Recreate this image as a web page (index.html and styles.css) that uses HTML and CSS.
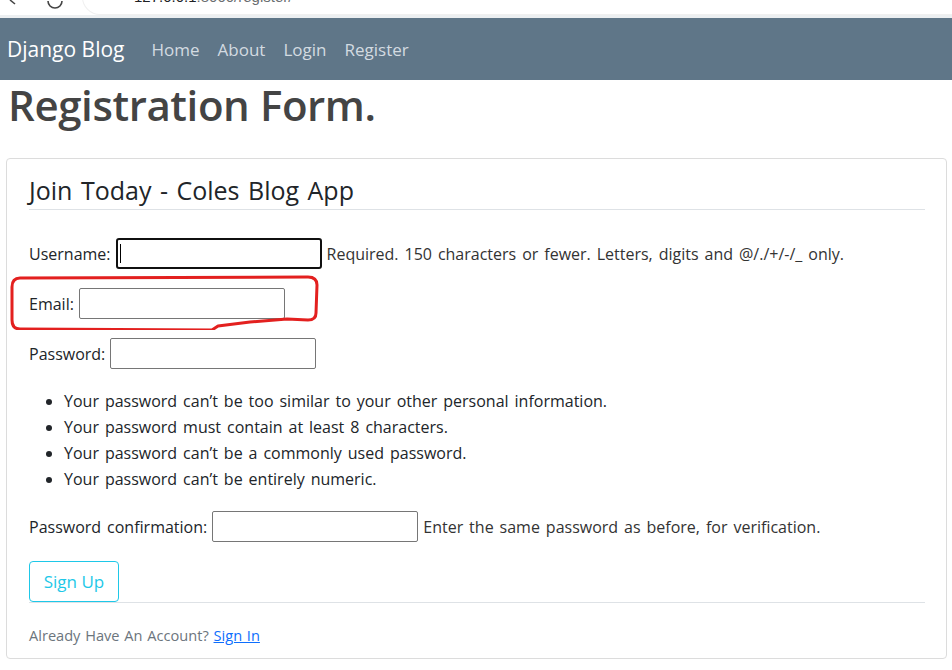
FILE: index.html
```html
<!DOCTYPE html>
<html lang="en">
<head>
<meta charset="utf-8">
<title>Register</title>
<link rel="stylesheet" href="styles.css">
</head>
<body>
<div class="chrome">
  <svg class="chrome-icons" width="130" height="18" viewBox="0 0 130 18">
    <path d="M10 0 L15 4" stroke="#444" stroke-width="1.6" fill="none"/>
    <path d="M48 1 A7 7 0 0 0 62 1" stroke="#444" stroke-width="1.6" fill="none"/>
    <path d="M102 0 A7 7 0 0 0 116 0" stroke="#666" stroke-width="1.3" fill="none"/>
  </svg>
  <div class="pill"><span class="host">127.0.0.1</span><span class="path">:8000/register/</span></div>
</div>
<nav class="navbar">
  <a class="brand" href="#">Django Blog</a>
  <a class="nav-link" href="#">Home</a>
  <a class="nav-link" href="#">About</a>
  <a class="nav-link" href="#">Login</a>
  <a class="nav-link" href="#">Register</a>
</nav>
<main class="main">
  <h1 class="title">Registration Form.</h1>
  <section class="card">
    <h2 class="legend">Join Today - Coles Blog App</h2>
    <form class="form">
      <div class="row">
        <label>Username:</label>
        <span class="input focused"><span class="caret"></span></span>
        <span class="help">Required. 150 characters or fewer. Letters, digits and @/./+/-/_ only.</span>
      </div>
      <div class="row">
        <label>Email:</label>
        <span class="input"></span>
      </div>
      <div class="row">
        <label>Password:</label>
        <span class="input"></span>
      </div>
      <ul class="rules">
        <li>Your password can’t be too similar to your other personal information.</li>
        <li>Your password must contain at least 8 characters.</li>
        <li>Your password can’t be a commonly used password.</li>
        <li>Your password can’t be entirely numeric.</li>
      </ul>
      <div class="row">
        <label>Password confirmation:</label>
        <span class="input"></span>
        <span class="help">Enter the same password as before, for verification.</span>
      </div>
      <div class="actions">
        <button type="button" class="btn">Sign Up</button>
      </div>
    </form>
    <div class="footer">
      <small>Already Have An Account? <a href="#">Sign In</a></small>
    </div>
  </section>
</main>
<svg class="annotation" width="330" height="60" viewBox="0 270 330 60">
  <path d="M20 278 L308 277 Q317 277 317 285 L316 313 Q316 320 308 320 L287 319 L250 322 L218 326 L212 330 L20 329 Q12 329 12 320 L12 287 Q12 278 20 278 Z" fill="none" stroke="#e3201f" stroke-width="3" stroke-linejoin="round"/>
</svg>
</body>
</html>
```
FILE: styles.css
```css
* { box-sizing: border-box; }
html, body { margin: 0; padding: 0; background: #fff; }
body {
  font-family: "Open Sans", "Noto Sans", sans-serif;
  font-size: 16px;
  color: #212529;
  position: relative;
  width: 952px;
  height: 670px;
  overflow: hidden;
}
.chrome {
  height: 18px;
  position: relative;
  background: #fff;
  border-bottom: 3px solid #eceff1;
  overflow: hidden;
}
.chrome-icons { position: absolute; left: 0; top: 0; }
.pill {
  position: absolute;
  left: 83px;
  top: -20px;
  width: 900px;
  height: 34px;
  border-radius: 17px;
  background: #fff;
  box-shadow: 0 0 0 1px #f0f0f0;
  padding: 8px 0 0 51px;
  font-family: "Liberation Sans", sans-serif;
  font-size: 15px;
  line-height: 18px;
}
.host { color: #202124; }
.path { color: #6a6d70; }
.navbar {
  height: 62px;
  background: #5f7688;
  display: flex;
  align-items: center;
  padding: 0 7px;
}
.brand {
  color: #fff;
  font-size: 21px;
  text-decoration: none;
  margin-right: 27px;
}
.nav-link {
  color: #d3dbe1;
  font-size: 17px;
  text-decoration: none;
  margin-right: 18px;
}
.main { padding: 0 5px 0 6px; }
.title {
  margin: 0 0 28px 2px;
  font-size: 42px;
  line-height: 50px;
  font-weight: 600;
  color: #444;
  letter-spacing: -0.4px;
}
.card {
  border: 1px solid #dcdcdc;
  border-radius: 4px;
  padding: 13px 21px 0 22px;
  height: 501px;
}
.legend {
  margin: 0;
  font-size: 25px;
  font-weight: 400;
  line-height: 37px;
  color: #212529;
  word-spacing: 2px;
  border-bottom: 1px solid #dee2e6;
  padding-bottom: 0;
  margin-bottom: 28px;
}
.form { word-spacing: 1.8px; }
.row {
  display: flex;
  align-items: center;
  gap: 5px;
  height: 31px;
  margin-bottom: 19px;
  white-space: nowrap;
}
.row label { color: #212529; }
.input {
  width: 206px;
  height: 31px;
  border: 1px solid #767676;
  border-radius: 2px;
  background: #fff;
  display: inline-block;
  position: relative;
}
.input.focused {
  border: 2px solid #101010;
  border-radius: 3px;
}
.caret {
  position: absolute;
  left: 2px;
  top: 4px;
  width: 1px;
  height: 19px;
  background: #000;
}
.help { color: #333; }
.rules {
  margin: 5px 0 19px;
  padding-left: 35px;
  line-height: 26px;
  color: #212529;
}
.actions { margin-top: 2px; }
.btn {
  font-family: inherit;
  font-size: 17px;
  color: #1ec8e8;
  background: #fff;
  border: 1px solid #1ec8e8;
  border-radius: 4px;
  width: 90px;
  height: 41px;
  padding: 0;
}
.footer {
  border-top: 1px solid #dee2e6;
  padding-top: 21px;
  color: #6c757d;
}
.footer small { font-size: 14.6px; word-spacing: 1px; }
.footer a { color: #0d6efd; text-decoration: underline; }
.annotation {
  position: absolute;
  left: 0;
  top: 270px;
}
```
